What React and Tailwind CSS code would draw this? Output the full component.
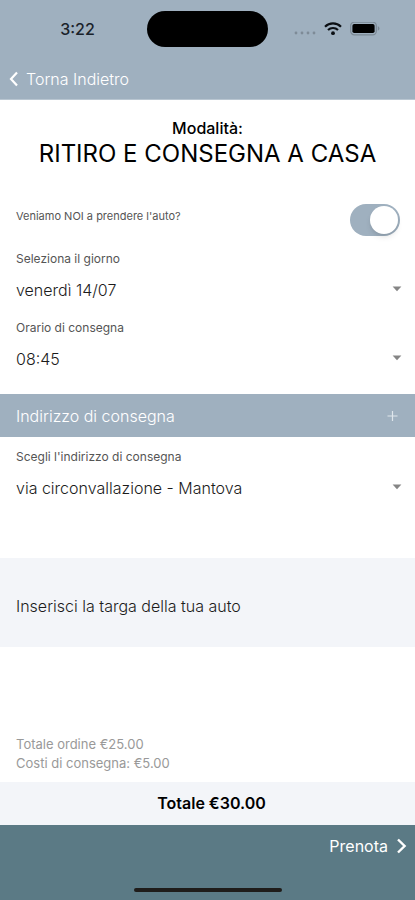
import React, { useState } from 'react';

const days = ['venerdì 14/07', 'sabato 15/07', 'lunedì 17/07'];
const hours = ['08:45', '09:45', '10:45'];
const addresses = ['via circonvallazione - Mantova'];

function StatusBar() {
    return (
        <div className="grid grid-cols-[1fr_121px_1fr] items-center h-[58px]">
            <span className="justify-self-center pl-2 text-base font-medium text-[#1a222a]">3:22</span>
            <div className="h-9 rounded-full bg-black"></div>
            <div className="flex items-center gap-2 pl-6">
                <svg width="24" height="12" viewBox="0 0 24 12" fill="#7e8b97" aria-hidden="true">
                    <circle cx="4" cy="10" r="1.4" />
                    <circle cx="10" cy="10" r="1.4" />
                    <circle cx="16" cy="10" r="1.4" />
                    <circle cx="22" cy="10" r="1.4" />
                </svg>
                <svg width="18" height="14" viewBox="0 0 18 14" fill="none" stroke="#0b0f13" strokeWidth="2.2" aria-hidden="true">
                    <path d="M1 4.7a11.5 11.5 0 0 1 16 0" />
                    <path d="M4 8a7.2 7.2 0 0 1 10 0" />
                    <circle cx="9" cy="11.2" r="1.9" fill="#0b0f13" stroke="none" />
                </svg>
                <svg width="32" height="14" viewBox="0 0 32 14" aria-hidden="true">
                    <rect x="0.7" y="0.2" width="25.6" height="12.6" rx="3.6" fill="none" stroke="#7b8894" strokeWidth="1.2" />
                    <rect x="2.4" y="1.9" width="22.2" height="9.2" rx="1.8" fill="#000" />
                    <path d="M27.8 4.3v4.4c1-.4 1.7-1.2 1.7-2.2s-.7-1.8-1.7-2.2z" fill="#7b8894" />
                </svg>
            </div>
        </div>
    );
}

function Field({ id, label, options }) {
    return (
        <div className="px-4">
            <label htmlFor={id} className="block text-xs leading-5 text-[#555]">{label}</label>
            <div className="relative">
                <select id={id} className="block w-full h-[42px] appearance-none bg-transparent text-base font-light text-[#1c1c1c]">
                    {options.map((option) => (
                        <option key={option}>{option}</option>
                    ))}
                </select>
                <svg className="absolute -right-1 top-4 pointer-events-none" width="12" height="8" viewBox="0 0 12 8" aria-hidden="true">
                    <path d="M1.6 1.4h8.8L6 6.2z" fill="#858585" />
                </svg>
            </div>
        </div>
    );
}

function App() {
    const [pickup, setPickup] = useState(true);
    const [plate, setPlate] = useState('');

    return (
        <div className="flex flex-col min-h-screen bg-white font-['Inter',sans-serif] text-black">
            <header className="bg-[#9fb0bf] border-b border-[#b9c6d1]">
                <StatusBar />
                <button type="button" className="flex items-center gap-2 h-[41px] px-2 text-base font-light text-white">
                    <svg width="10" height="16" viewBox="0 0 10 16" fill="none" stroke="#fff" strokeWidth="2.2" aria-hidden="true">
                        <path d="M9 1.5 3 8l6 6.5" />
                    </svg>
                    Torna Indietro
                </button>
            </header>

            <main className="flex-1 flex flex-col">
                <div className="pt-[18px] text-center">
                    <p className="text-base leading-5 font-medium">Modalità:</p>
                    <h1 className="text-2xl leading-8">RITIRO E CONSEGNA A CASA</h1>
                </div>

                <div className="flex items-center justify-between mt-[34px] px-[15px]">
                    <label htmlFor="pickup" className="pb-2 pl-px text-[11px] leading-4 text-[#555]">Veniamo NOI a prendere l'auto?</label>
                    <input
                        id="pickup"
                        type="checkbox"
                        role="switch"
                        checked={pickup}
                        onChange={(e) => setPickup(e.target.checked)}
                        className="appearance-none w-[50px] h-8 p-0.5 rounded-full bg-gray-300 checked:bg-[#9fb0bf] before:block before:size-7 before:rounded-full before:bg-white before:shadow-md checked:before:ml-[18px]"
                    />
                </div>

                <div className="flex flex-col gap-[7px] pt-[13px] pb-3.5">
                    <Field id="day" label="Seleziona il giorno" options={days} />
                    <Field id="hour" label="Orario di consegna" options={hours} />
                </div>

                <div className="flex items-center justify-between h-[43px] px-4 bg-[#9fb0bf] text-white">
                    <h2 className="text-base font-light">Indirizzo di consegna</h2>
                    <button type="button" aria-label="Aggiungi indirizzo">
                        <svg width="14" height="12" viewBox="0 0 14 12" fill="none" stroke="#dfe6ec" strokeWidth="1.2" aria-hidden="true">
                            <path d="M7.5 1v10M2.5 6h10" />
                        </svg>
                    </button>
                </div>

                <div className="pt-2.5">
                    <Field id="address" label="Scegli l'indirizzo di consegna" options={addresses} />
                </div>

                <input
                    type="text"
                    aria-label="Targa"
                    placeholder="Inserisci la targa della tua auto"
                    value={plate}
                    onChange={(e) => setPlate(e.target.value)}
                    className="w-full h-[89px] mt-[49px] px-4 pt-1.5 bg-[#f3f5f9] text-base font-light placeholder:text-[#1c1c1c] placeholder:opacity-100"
                />

                <div className="mt-auto px-4 pb-[9px] text-[13px] leading-[19px] text-[#999]">
                    <p>Totale ordine €25.00</p>
                    <p>Costi di consegna: €5.00</p>
                </div>
                <p className="h-[43px] pl-2 bg-[#f3f5f9] text-center text-base leading-[43px] font-semibold">Totale €30.00</p>
            </main>

            <footer className="flex flex-col items-center h-[75px] bg-[#5b7a85]">
                <button type="button" className="self-end flex items-center gap-2 h-[42px] px-2 text-base text-white">
                    Prenota
                    <svg width="11" height="16" viewBox="0 0 11 16" fill="none" stroke="#fff" strokeWidth="2.4" aria-hidden="true">
                        <path d="M2 1.5 8.6 8 2 14.5" />
                    </svg>
                </button>
                <div className="w-[148px] h-1 mt-auto mb-2 rounded-full bg-[#1f1c1a]"></div>
            </footer>
        </div>
    );
}

export default App;
